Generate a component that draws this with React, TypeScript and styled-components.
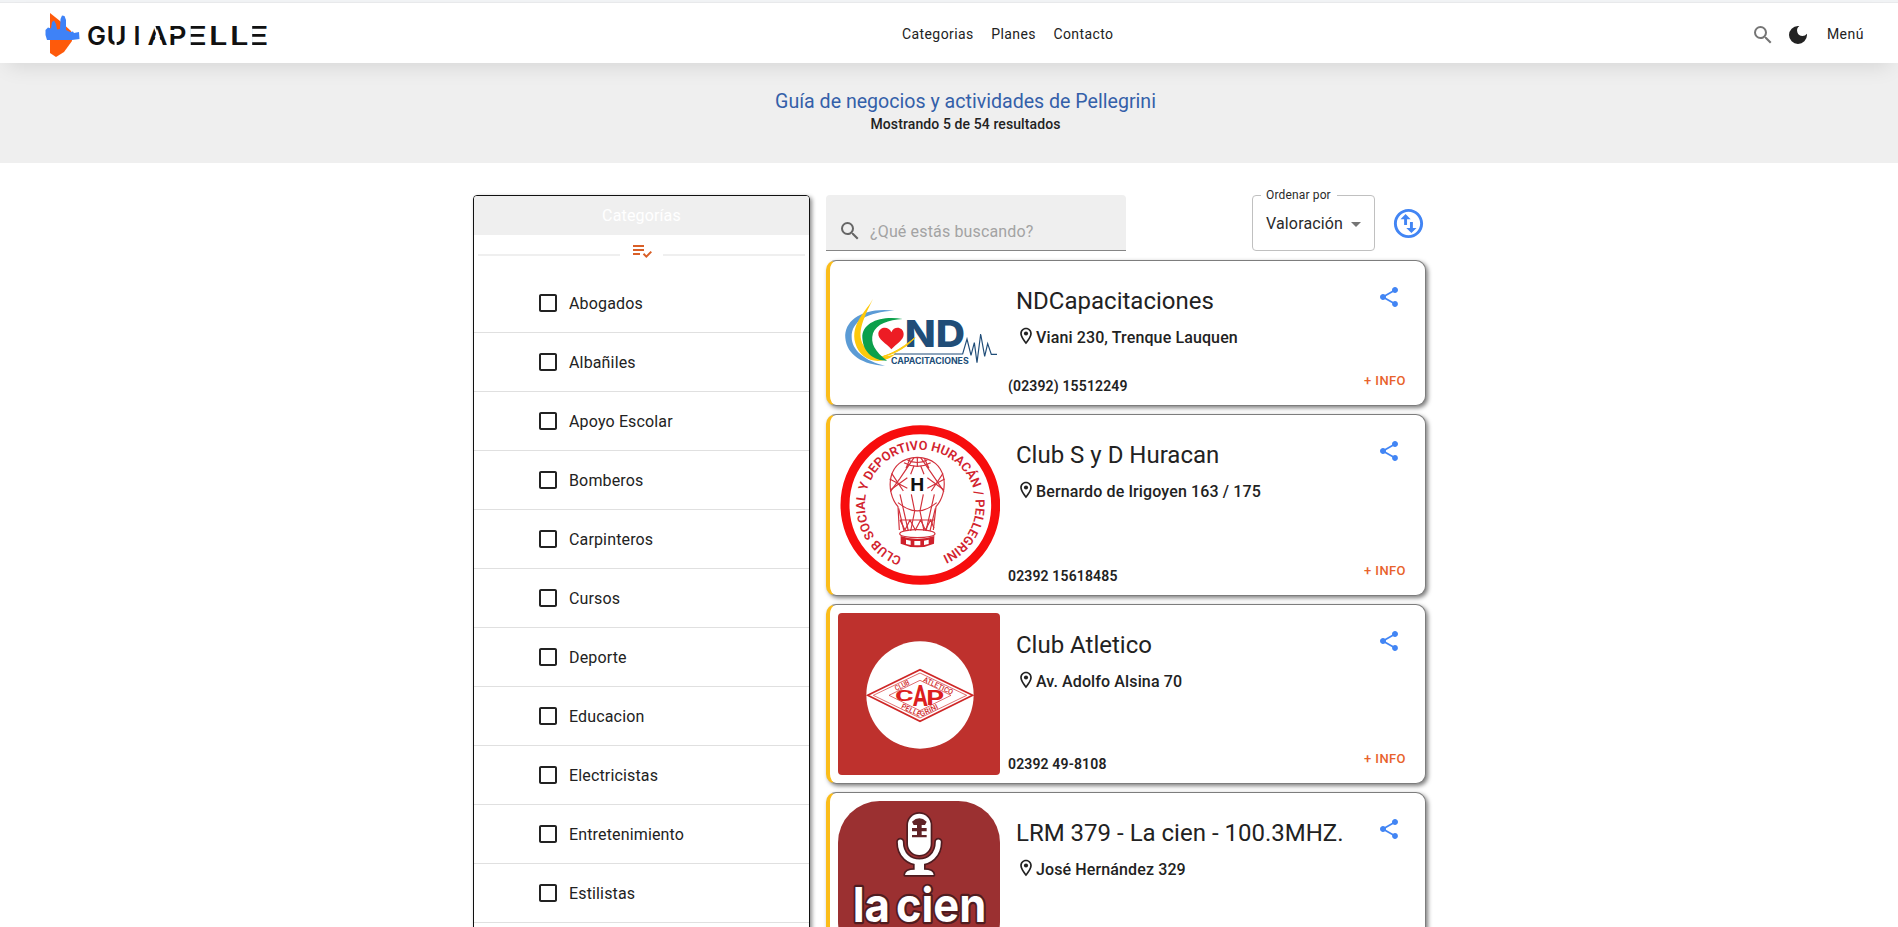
import React from 'react';
import styled, { createGlobalStyle } from 'styled-components';
import {
  MdSearch,
  MdDarkMode,
  MdShare,
  MdPlaylistAddCheck,
  MdCheckBoxOutlineBlank,
  MdArrowDropDown,
  MdOutlineSwapVerticalCircle,
  MdOutlineLocationOn,
} from 'react-icons/md';

const GlobalStyle = createGlobalStyle`
  *, *::before, *::after { box-sizing: border-box; }
  body {
    margin: 0;
    background: #fff;
    color: #222;
    font-family: Roboto, "Liberation Sans", sans-serif;
    overflow: hidden;
  }
  h1, h2, p, ul { margin: 0; padding: 0; font-weight: 400; }
  svg { display: block; flex: none; }
`;

const Page = styled.div`
  height: 100vh;
  overflow: hidden;
  display: flex;
  flex-direction: column;
`;

const TopStrip = styled.div`
  flex: none;
  height: 3px;
  background: #f1f3f5;
  border-bottom: 1px solid #e9eaec;
`;

const Header = styled.header`
  position: relative;
  z-index: 1;
  flex: none;
  height: 60px;
  display: grid;
  grid-template-columns: 902px 1fr auto;
  align-items: center;
  padding-right: 34px;
  background: #fff;
  box-shadow: 0 10px 22px -8px rgba(0, 0, 0, 0.12);
`;

const Brand = styled.a`
  padding-left: 40px;
`;

const Nav = styled.nav`
  display: flex;
  gap: 17.5px;
  padding-top: 2px;
`;

const NavLink = styled.a`
  font-size: 14px;
  line-height: 20px;
  letter-spacing: 0.41px;
`;

const Actions = styled.div`
  display: flex;
  align-items: center;
  gap: 11px;
  padding-top: 3px;
`;

const MenuLink = styled(NavLink)`
  margin: -1px 0 0 6px;
  letter-spacing: 0.5px;
`;

const Hero = styled.section`
  flex: none;
  height: 100px;
  padding: 27px 0 0 33px;
  background: #efefef;
  text-align: center;
`;

const HeroTitle = styled.h1`
  font-size: 19.6px;
  line-height: 24px;
  color: #3460a9;
`;

const HeroCount = styled.p`
  font-size: 14px;
  font-weight: 500;
  line-height: 20px;
  letter-spacing: 0.1px;
`;

const Main = styled.main`
  flex: 1;
  min-height: 0;
  display: flex;
  align-items: flex-start;
  gap: 16px;
  padding: 32px 0 0 473px;
`;

const Sidebar = styled.aside`
  width: 337px;
  height: 960px;
  border: 1px solid #111;
  border-radius: 4px;
  box-shadow: 2px 2px 4px rgba(0, 0, 0, 0.45);
  overflow: hidden;
`;

const SidebarTitle = styled.h2`
  height: 39px;
  background: #efefef;
  color: #fff;
  font-size: 16px;
  line-height: 40px;
  letter-spacing: 0.15px;
  text-align: center;
`;

const Divider = styled.div`
  display: flex;
  align-items: center;
  height: 39px;
  padding: 0 4px;
  color: #d95f27;

  &::before, &::after {
    content: '';
    flex: 1;
    height: 2px;
    background: #efefef;
  }
`;

const DividerIcon = styled.span`
  padding: 0 9px 8px 10px;
`;

const CategoryRow = styled.li`
  display: flex;
  align-items: center;
  gap: 9px;
  height: 59px;
  padding-left: 62px;
  border-bottom: 1px solid #e0e0e0;
  list-style: none;
  font-size: 16px;
  letter-spacing: 0.15px;
`;

const Results = styled.div`
  width: 600px;
  display: flex;
  flex-direction: column;
  gap: 8px;
`;

const Toolbar = styled.div`
  display: flex;
  align-items: flex-start;
  height: 57px;
`;

const SearchField = styled.label`
  display: flex;
  align-items: flex-end;
  gap: 8px;
  width: 300px;
  height: 56px;
  padding: 0 12px 7px;
  background: #efefef;
  border-bottom: 1px solid #858585;
  border-radius: 4px 4px 0 0;
  color: #666;
`;

const SearchInput = styled.input`
  flex: 1;
  height: 24px;
  margin-bottom: -1px;
  padding: 0;
  border: 0;
  outline: 0;
  background: transparent;
  font: 400 16px/24px Roboto, "Liberation Sans", sans-serif;
  letter-spacing: 0.15px;

  &::placeholder { color: #a3a3a3; opacity: 1; }
`;

const SortField = styled.fieldset`
  display: flex;
  align-items: center;
  width: 123px;
  height: 62px;
  margin: -6px 16px 0 126px;
  padding: 0 6px 5px 13px;
  border: 1px solid #c0c0c0;
  border-radius: 4px;
  font-size: 16px;
  letter-spacing: 0.15px;
  color: #2a2a2a;

  svg { color: #757575; margin-left: auto; }
`;

const SortLabel = styled.legend`
  margin-left: -5px;
  padding: 0 6px 0 5px;
  font-size: 12px;
  line-height: 13px;
  letter-spacing: 0.15px;
  white-space: nowrap;
`;

const SortDirection = styled.span`
  padding-top: 11px;
  color: #4285f4;
`;

const Card = styled.article`
  display: flex;
  padding: 8px;
  border: 1px solid #7d7d7d;
  border-left: 4px solid #fbbd1a;
  border-radius: 10px;
  background: #fff;
  box-shadow: 2px 2px 4px rgba(0, 0, 0, 0.5);
`;

const CardBody = styled.div`
  flex: 1;
  display: flex;
  flex-direction: column;
  justify-content: space-between;
`;

const CardTop = styled.div`
  display: flex;
  justify-content: space-between;
  align-items: flex-start;
  padding: 16px 16px 0;
  color: #4285f4;
`;

const CardName = styled.h2`
  color: #222;
  font-size: 24px;
  line-height: 32px;
`;

const Address = styled.p`
  display: flex;
  align-items: flex-start;
  margin-top: 9px;
  color: #222;
  font-size: 16px;
  font-weight: 500;
  line-height: 24px;
  letter-spacing: 0.12px;
`;

const CardFoot = styled.div`
  display: flex;
  justify-content: space-between;
  align-items: flex-end;
  padding: 0 11px 0 8px;
`;

const Phone = styled.p`
  font-size: 14px;
  font-weight: 600;
  line-height: 22px;
  letter-spacing: 0.15px;
`;

const InfoLink = styled.a`
  margin-bottom: 5px;
  color: #e8622c;
  font-size: 13px;
  font-weight: 500;
  line-height: 23px;
  letter-spacing: 0.42px;
`;

/* Each letter: character, left edge, width */
const brandLetters: [string, number, number][] = [
  ['G', 87, 19], ['U', 106.5, 20], ['I', 133.5, 7], ['A', 147.5, 20], ['P', 168.5, 18],
  ['L', 209, 18.5], ['L', 230, 18.5],
];

function BrandLogo() {
  return (
    <svg width="230" height="54" viewBox="40 6 230 54">
      <clipPath id="brand-bars">
        <rect x="190.700" y="20" width="17" height="30" />
        <rect x="252.200" y="20" width="17" height="30" />
      </clipPath>
      <path d="M50 13 L60 21 L71 31 L72 41 L64 52 L56 57 L50 53 Z" fill="#fe5a0b" />
      <path
        d="M45.5 30 L48 27.5 L51 28.5 L52 22 L54 20.5 L56 24 L57 29.5 L60 29 L60.5 19 L62 15.5 L64.500 16 L66 20 L66 30 L70 32 L73 31.500 L74 33 L79 32 L79.500 39 L72 40 L47 40 L45.500 35 Z"
        fill="#3e82f7"
      />
      <g fontFamily="Inter, sans-serif" fontWeight="600" fontSize="26" fill="#111">
        {brandLetters.map(([ch, x, w], i) => (
          <text key={i} x={x} y="45" textLength={w} lengthAdjust="spacingAndGlyphs">{ch}</text>
        ))}
        <g clipPath="url(#brand-bars)">
          <text x="181.500" y="45" textLength="26" lengthAdjust="spacingAndGlyphs">E</text>
          <text x="243" y="45" textLength="26" lengthAdjust="spacingAndGlyphs">E</text>
        </g>
      </g>
      <g fill="#fff">
        <path d="M114.500 40 h2.200 v6 h-2.200 z" />
        <path d="M157.500 31 L162.600 46 L152.400 46 Z M153 25 L155 25 L159 36 L157 36 Z" />
        <path d="M168 30 h7 v4 h-7 z" />
      </g>
    </svg>
  );
}

function NdLogo() {
  return (
    <svg width="162" height="128" viewBox="69 252 486 384">
      <path d="M238 377 C145 366 87 405 91 459 C95 510 145 540 210 542 C150 528 110 496 110 456 C109 408 158 381 238 377Z" fill="#5b9bd5" />
      <path d="M174 341 C155 378 105 415 121 475 C136 531 200 545 245 505 C215 520 185 515 163 499 C112 461 146 400 174 341Z" fill="#fdc90c" />
      <path d="M263 402 C200 391 140 411 142 459 C145 507 182 528 216 527 C180 500 165 475 174 445 C185 416 220 405 263 402Z" fill="#0ba04b" />
      <path d="M229 493 C214 475 188 464 190 445 C193 424 222 422 229 442 C237 421 265 425 266 447 C267 465 243 477 229 493Z" fill="#ed1c24" />
      <text x="269" y="486" fontFamily="Inter, sans-serif" fontWeight="800" fontSize="112" textLength="181" lengthAdjust="spacingAndGlyphs" fill="#204d78">ND</text>
      <path d="M300 458 C275 485 245 505 205 514 C247 500 272 480 300 458Z" fill="#fdc90c" stroke="#fdc90c" strokeWidth="3" />
      <path d="M238 507 H443 L456 462 L468 511 L478 473 L486 533 L497 447 L509 514 L518 476 L529 508 H546" fill="none" stroke="#204d78" strokeWidth="3.5" />
      <text x="228" y="536" fontFamily="Inter, sans-serif" fontWeight="700" fontSize="25" textLength="233" lengthAdjust="spacingAndGlyphs" fill="#204d78">CAPACITACIONES</text>
    </svg>
  );
}

function HuracanLogo() {
  return (
    <svg width="162" height="164" viewBox="54 54 486 492">
      <circle cx="301" cy="300" r="226" fill="#fff" stroke="#f70d0d" strokeWidth="27" />
      <path id="huracan-ring" d="M246 457 A166 166 0 1 1 356 457" fill="none" />
      <text fontFamily="Roboto, sans-serif" fontWeight="600" fontSize="38" fill="#d2232e">
        <textPath href="#huracan-ring" textLength="918" lengthAdjust="spacingAndGlyphs">
          CLUB SOCIAL Y DEPORTIVO HURACÁN / PELLEGRINI
        </textPath>
      </text>
      <g fill="none" stroke="#d2303b" strokeWidth="3.5">
        <path d="M238 375 L234 305 C195 260 198 160 292 157 C386 160 388 260 348 305 L340 375" />
        <path d="M234 293 Q292 342 350 293 M252 173 Q292 195 332 173 M262 165 Q292 180 322 165" />
        <path d="M292 157 V183 M282 158 L240 220 L211 260 M302 158 L345 220 L372 260 M270 162 L258 190 M314 162 L327 190" />
        <path d="M209 222 L262 250 M211 255 L262 218 M215 205 L250 258 M374 222 L322 250 M372 255 L322 218 M369 205 L334 258" />
        <path d="M282 182 L272 208 M302 182 L312 208 M274 268 L284 318 L272 378 M310 268 L300 318 L312 378 M240 268 L265 378 M343 268 L318 378 M236 310 L252 378 M346 310 L330 378" />
        <path d="M240 345 H344 M240 345 L255 375 L270 345 L286 375 L302 345 L316 375 L332 345 L342 370" />
        <ellipse cx="292" cy="386" rx="53" ry="12" />
      </g>
      <path d="M242 393 Q292 411 343 393 L342 416 Q292 438 242 416Z" fill="#cf202b" />
      <path d="M258 404 l14 3 v13 l-14 -3z M283 408 h18 v13 h-18z M312 407 l14 -3 v13 l-14 3z" fill="#fff" />
      <text x="271" y="257" fontFamily="Roboto, sans-serif" fontWeight="700" fontSize="56" textLength="42" lengthAdjust="spacingAndGlyphs" fill="#111">H</text>
    </svg>
  );
}

function AtleticoLogo() {
  return (
    <svg width="162" height="162" viewBox="54 54 486 486">
      <rect x="54" y="54" width="486" height="486" rx="12" fill="#be312d" />
      <circle cx="300" cy="300" r="161" fill="#fff" />
      <g fill="none" stroke="#cf2727">
        <path d="M143 301 L300 224 L458 301 L300 379 Z" strokeWidth="5" />
        <path d="M160 301 L300 234 L440 301 L300 369 Z" strokeWidth="2" />
        <path d="M207 301 L300 256 L393 301 L300 347 Z" strokeWidth="2" />
      </g>
      <g fontFamily="Roboto, sans-serif" fill="#cf2727" fontWeight="500">
        <text transform="translate(229 288) rotate(-26)" fontSize="22" textLength="46" lengthAdjust="spacingAndGlyphs">CLUB</text>
        <text transform="translate(308 259) rotate(25)" fontSize="22" textLength="96" lengthAdjust="spacingAndGlyphs">ATLETICO</text>
        <text transform="translate(242 339) rotate(25)" fontSize="22" textLength="62" lengthAdjust="spacingAndGlyphs">PELLE</text>
        <text transform="translate(304 365) rotate(-26)" fontSize="22" textLength="58" lengthAdjust="spacingAndGlyphs">GRINI</text>
      </g>
      <g fontFamily="Roboto, sans-serif" fill="#dc1f1f" fontWeight="700">
        <text x="225" y="319" fontSize="46" textLength="56" lengthAdjust="spacingAndGlyphs">C</text>
        <text x="279" y="332" fontSize="88" textLength="44" lengthAdjust="spacingAndGlyphs">A</text>
        <text x="319" y="331" fontSize="58" textLength="54" lengthAdjust="spacingAndGlyphs">P</text>
      </g>
    </svg>
  );
}

function LaCienLogo() {
  return (
    <svg width="162" height="162" viewBox="54 63 486 486">
      <rect x="54" y="63" width="486" height="486" rx="125" fill="#9b3031" />
      <g stroke="#4f1c20" strokeWidth="10" fill="#4f1c20" strokeLinejoin="round">
        <rect x="264" y="101" width="68" height="124" rx="34" />
        <path d="M241 186 C241 266 355 266 355 186" fill="none" strokeWidth="25" strokeLinecap="round" />
        <path d="M284 240 h28 v29 q28 0 29 16 h-86 q1 -16 29 -16z" />
      </g>
      <g fill="#fff">
        <rect x="264" y="101" width="68" height="124" rx="34" />
        <path d="M241 186 C241 266 355 266 355 186" fill="none" stroke="#fff" strokeWidth="15" strokeLinecap="round" />
        <path d="M284 240 h28 v29 q28 0 29 16 h-86 q1 -16 29 -16z" />
      </g>
      <path d="M276 125 q22 -20 44 0 l-5 10 h-10 v9 h15 v10 h-15 v11 h15 v7 h-44 v-7 h15 v-11 h-15 v-10 h15 v-9 h-10z" fill="#602326" />
      <g
        fontFamily="Inter, sans-serif" fontWeight="700" fontSize="143"
        fill="#fff" stroke="#4f1c20" strokeWidth="13" strokeLinejoin="round" paintOrder="stroke"
      >
        <text x="98" y="425" textLength="112" lengthAdjust="spacingAndGlyphs">la</text>
        <text x="228" y="425" textLength="271" lengthAdjust="spacingAndGlyphs">cien</text>
      </g>
    </svg>
  );
}

const categories = [
  'Abogados', 'Albañiles', 'Apoyo Escolar', 'Bomberos', 'Carpinteros', 'Cursos',
  'Deporte', 'Educacion', 'Electricistas', 'Entretenimiento', 'Estilistas',
];

const businesses = [
  { name: 'NDCapacitaciones', address: 'Viani 230, Trenque Lauquen', phone: '(02392) 15512249', Logo: NdLogo },
  { name: 'Club S y D Huracan', address: 'Bernardo de Irigoyen 163 / 175', phone: '02392 15618485', Logo: HuracanLogo },
  { name: 'Club Atletico', address: 'Av. Adolfo Alsina 70', phone: '02392 49-8108', Logo: AtleticoLogo },
  { name: 'LRM 379 - La cien - 100.3MHZ.', address: 'José Hernández 329', phone: '', Logo: LaCienLogo },
];

export default function App() {
  return (
    <Page>
      <GlobalStyle />
      <TopStrip />
      <Header>
        <Brand><BrandLogo /></Brand>
        <Nav>
          <NavLink>Categorias</NavLink>
          <NavLink>Planes</NavLink>
          <NavLink>Contacto</NavLink>
        </Nav>
        <Actions>
          <MdSearch size={24} color="#757575" />
          <MdDarkMode size={24} />
          <MenuLink>Menú</MenuLink>
        </Actions>
      </Header>
      <Hero>
        <HeroTitle>Guía de negocios y actividades de Pellegrini</HeroTitle>
        <HeroCount>Mostrando 5 de 54 resultados</HeroCount>
      </Hero>
      <Main>
        <Sidebar>
          <SidebarTitle>Categorías</SidebarTitle>
          <Divider>
            <DividerIcon><MdPlaylistAddCheck size={24} /></DividerIcon>
          </Divider>
          <ul>
            {categories.map((name) => (
              <CategoryRow key={name}>
                <MdCheckBoxOutlineBlank size={24} />
                {name}
              </CategoryRow>
            ))}
          </ul>
        </Sidebar>
        <Results>
          <Toolbar>
            <SearchField>
              <MdSearch size={24} />
              <SearchInput placeholder="¿Qué estás buscando?" />
            </SearchField>
            <SortField>
              <SortLabel>Ordenar por</SortLabel>
              Valoración
              <MdArrowDropDown size={24} />
            </SortField>
            <SortDirection><MdOutlineSwapVerticalCircle size={35} /></SortDirection>
          </Toolbar>
          {businesses.map(({ name, address, phone, Logo }) => (
            <Card key={name}>
              <Logo />
              <CardBody>
                <CardTop>
                  <div>
                    <CardName>{name}</CardName>
                    <Address><MdOutlineLocationOn size={20} />{address}</Address>
                  </div>
                  <MdShare size={24} />
                </CardTop>
                <CardFoot>
                  <Phone>{phone}</Phone>
                  <InfoLink>+ INFO</InfoLink>
                </CardFoot>
              </CardBody>
            </Card>
          ))}
        </Results>
      </Main>
    </Page>
  );
}
